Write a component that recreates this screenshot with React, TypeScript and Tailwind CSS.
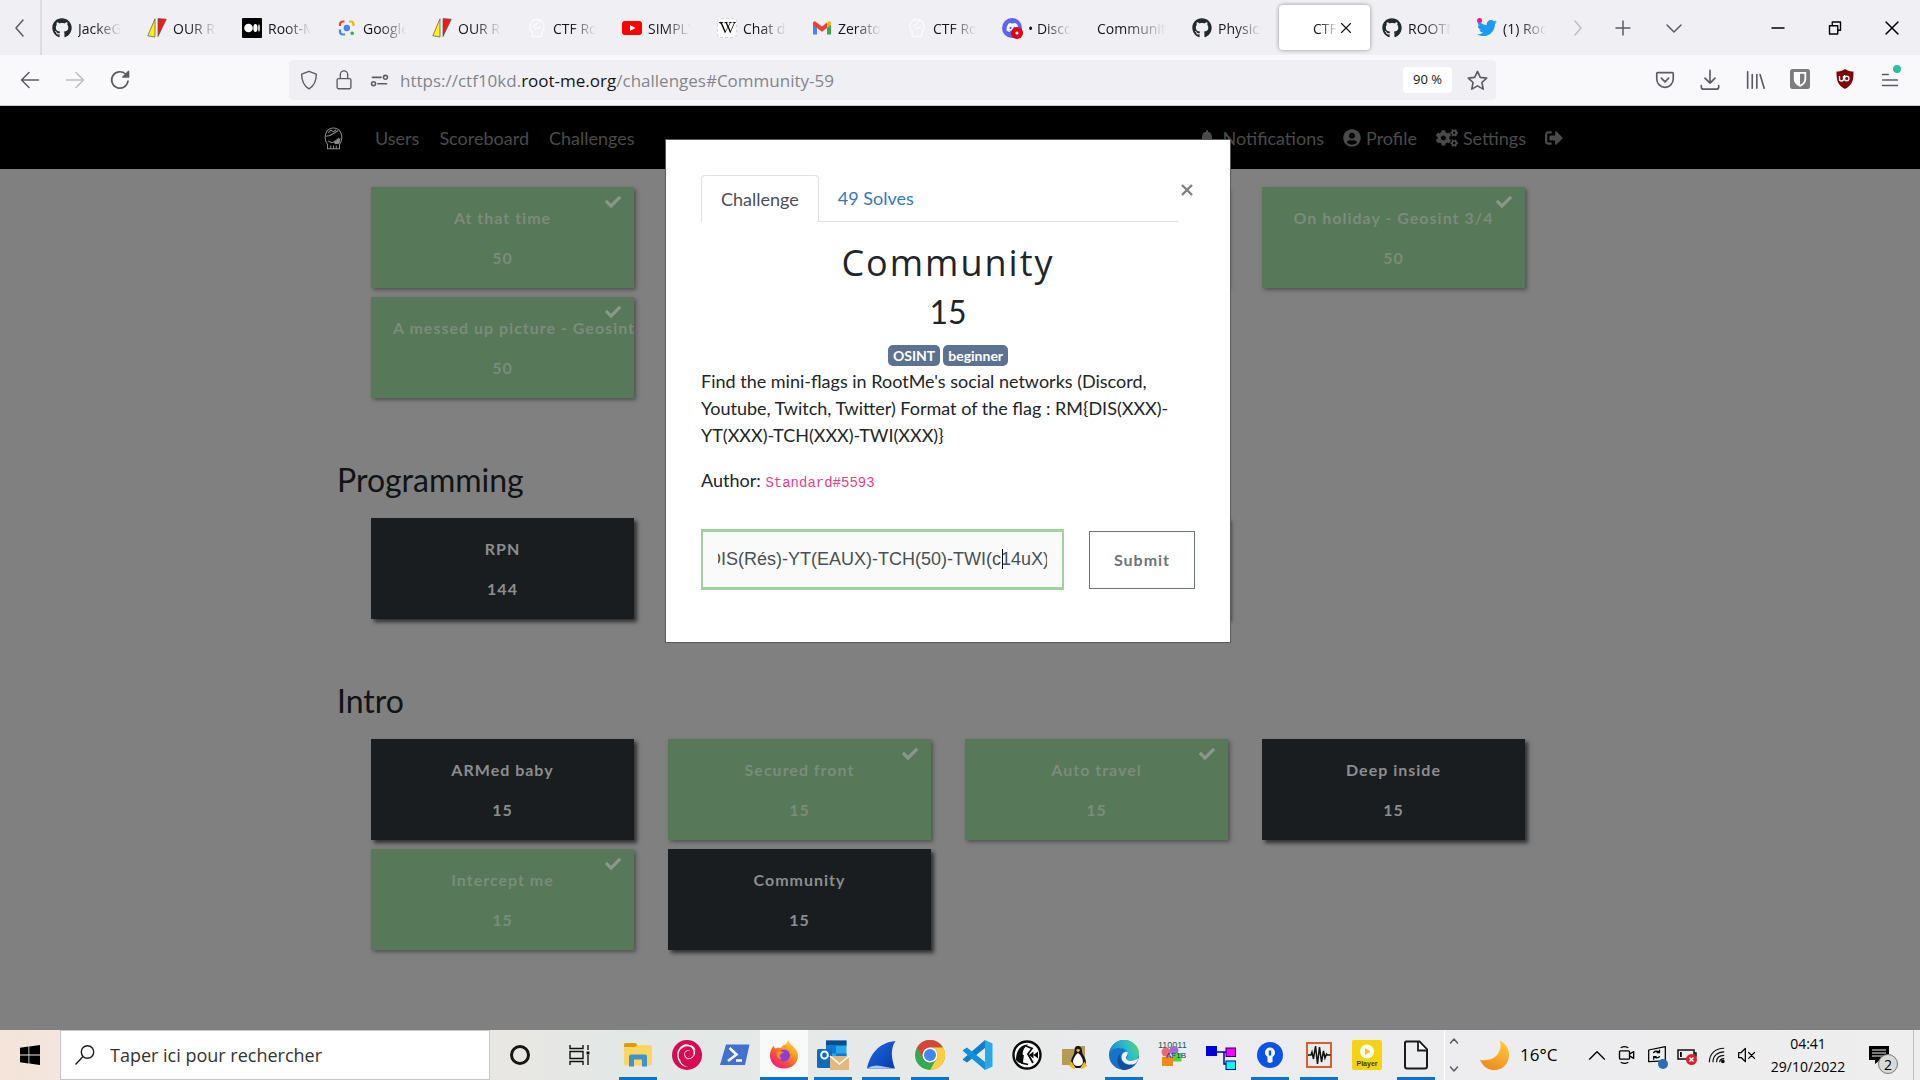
import { useEffect, useRef } from "react";
import type { ReactNode } from "react";
import {
  FaBell,
  FaCheck,
  FaCogs,
  FaGithub,
  FaSignOutAlt,
  FaTwitter,
  FaUserCircle,
  FaWikipediaW,
  FaDiscord,
} from "react-icons/fa";
import { SiDebian } from "react-icons/si";

/* ---------- favicons ---------- */

const Github = () => <FaGithub className="size-5 text-[#24292f]" />;

const Slashes = () => (
  <svg viewBox="0 0 20 20" className="size-5">
    <path d="M8 .8V19L.8 17.8z" fill="#ffee10" stroke="#555" strokeWidth=".7" />
    <path d="M11 .6l8.3.6L11 18.6z" fill="#ee1c1c" stroke="#555" strokeWidth=".7" />
  </svg>
);

const Medium = () => (
  <svg viewBox="0 0 20 20" className="size-5">
    <rect width="20" height="20" rx="1" />
    <circle cx="6.5" cy="10" r="4.3" fill="#fff" />
    <ellipse cx="13.4" cy="10" rx="2.1" ry="4.1" fill="#fff" />
    <ellipse cx="17" cy="10" rx=".8" ry="3.7" fill="#fff" />
  </svg>
);

const Lens = () => (
  <svg viewBox="0 0 20 20" className="size-5" fill="none" strokeWidth="2.2">
    <path d="M3 8V6.500A3 3 0 0 1 6 3.500h1.500" stroke="#ea4335" />
    <path d="M12 3.500h1.500a3 3 0 0 1 3 3V8" stroke="#f4b400" />
    <path d="M3 11.500V13.500a3 3 0 0 0 3 3h2" stroke="#4285f4" />
    <circle cx="9.800" cy="10" r="3.200" fill="#4285f4" />
    <circle cx="15.200" cy="15.200" r="1.800" fill="#34a853" />
  </svg>
);

const FaintSkull = () => (
  <svg viewBox="0 0 20 20" className="size-5" fill="none" stroke="#fafafc" strokeWidth="1.500">
    <path d="M5 14C1.500 10 3 1.500 10 1.500S18.500 10 15 14l-.5 4.500h-9zM6 9l7-6M8 11l6-2" />
  </svg>
);

const Youtube = () => (
  <svg viewBox="0 0 20 20" className="size-5">
    <rect y="3" width="20" height="14" rx="3" fill="#f00" />
    <path d="M8 7l5.500 3L8 13z" fill="#fff" />
  </svg>
);

const Wikipedia = () => (
  <span className="flex size-5 items-center justify-center rounded-sm border border-dashed border-neutral-300 bg-white">
    <FaWikipediaW className="size-[17px] text-black" />
  </span>
);

const Gmail = () => (
  <svg viewBox="0 0 20 20" className="size-5">
    <path d="M1 5v11.500h4V8.500z" fill="#4285f4" />
    <path d="M19 5v11.500h-4V8.500z" fill="#34a853" />
    <path d="M15 4.500L17 3q2 0 2 2v2l-4 3z" fill="#fbbc04" />
    <path d="M1 5q0-2 2-1.800L10 8.600l5-4V10l-5 3.800L5 10 1 7z" fill="#ea4335" />
  </svg>
);

const Discord = () => (
  <span className="relative flex size-5 items-center justify-center rounded-full bg-[#5865f2]">
    <FaDiscord className="size-[13px] text-white" />
    <svg viewBox="0 0 12 12" className="absolute -right-px -bottom-px size-3">
      <circle cx="6" cy="6" r="6" fill="#e3000f" />
      <circle cx="6" cy="6" r="1.500" fill="#fff" />
    </svg>
  </span>
);

const Twitter = () => (
  <span className="relative size-5">
    <FaTwitter className="size-5 text-[#1d9bf0]" />
    <span className="absolute top-0 left-0 size-[5px] rounded-full bg-[#f91880]" />
  </span>
);

type Tab = { label: string; icon?: ReactNode };

const tabs: Tab[] = [
  { label: "JackeG", icon: <Github /> },
  { label: "OUR RA", icon: <Slashes /> },
  { label: "Root-M", icon: <Medium /> },
  { label: "Google", icon: <Lens /> },
  { label: "OUR RA", icon: <Slashes /> },
  { label: "CTF Ro", icon: <FaintSkull /> },
  { label: "SIMPLY", icon: <Youtube /> },
  { label: "Chat de", icon: <Wikipedia /> },
  { label: "Zerato", icon: <Gmail /> },
  { label: "CTF Ro", icon: <FaintSkull /> },
  { label: "• Disco", icon: <Discord /> },
  { label: "Communit" },
  { label: "Physics", icon: <Github /> },
];

const lastTabs: Tab[] = [
  { label: "ROOTM", icon: <Github /> },
  { label: "(1) Roo", icon: <Twitter /> },
];

function TabButton({ tab }: { tab: Tab }) {
  return (
    <button className="flex h-full min-w-0 items-center gap-[6px] pr-4 pl-[10px] text-left">
      {tab.icon && <span className="flex shrink-0">{tab.icon}</span>}
      <span className="min-w-0 flex-1 overflow-hidden pt-px text-[14px] whitespace-nowrap text-[#15141a] [mask-image:linear-gradient(to_right,#000_40%,transparent)]">
        {tab.label}
      </span>
    </button>
  );
}

/* ---------- generic line icon ---------- */

function Line({ d, size = "size-6", width = 1.5, color = "text-[#5b5b66]" }: { d: string; size?: string; width?: number; color?: string }) {
  return (
    <svg viewBox="0 0 24 24" className={`shrink-0 ${size} ${color}`} fill="none" stroke="currentColor" strokeWidth={width} strokeLinecap="round" strokeLinejoin="round">
      <path d={d} />
    </svg>
  );
}

function TabStrip() {
  return (
    <div className="flex h-[55px] shrink-0 items-center bg-[#f0f0f4]">
      <button aria-label="Scroll tabs left" className="flex h-full w-[42px] items-center justify-center border-r-2 border-[#dcdce2]">
        <Line d="M15 4l-7 8 7 8" />
      </button>
      <div className="grid h-full min-w-0 flex-1 auto-cols-[minmax(0,1fr)] grid-flow-col items-center">
        {tabs.map((t, i) => (
          <TabButton key={i} tab={t} />
        ))}
        <div className="flex h-full min-w-0 items-center px-[2px]">
          <button className="flex h-[45px] w-full items-center gap-[3px] rounded bg-white pl-[34px] text-left shadow-[0_0_4px_rgba(0,0,0,0.4)]">
            <span className="w-6 shrink-0 overflow-hidden pt-px text-[14px] text-[#15141a] [mask-image:linear-gradient(to_right,#000_30%,transparent)]">CTF</span>
            <Line d="M3 3l18 18M21 3L3 21" size="size-3" width={2.2} color="text-[#15141a]" />
          </button>
        </div>
        {lastTabs.map((t, i) => (
          <TabButton key={i} tab={t} />
        ))}
      </div>
      <button aria-label="Scroll tabs right" className="flex w-[32px] justify-center">
        <Line d="M9 5l6 7-6 7" color="text-[#bdbdc4]" />
      </button>
      <button aria-label="New tab" className="flex w-[58px] justify-center">
        <Line d="M12 5v14M5 12h14" />
      </button>
      <button aria-label="List all tabs" className="flex w-[44px] justify-center">
        <Line d="M5 9l7 7 7-7" />
      </button>
      <button aria-label="Minimize" className="ml-[53px] flex w-[57px] justify-center">
        <Line d="M6 12h12" color="text-black" />
      </button>
      <button aria-label="Restore" className="flex w-[57px] justify-center">
        <Line d="M6 9.500h9v9H6zM9 9.500v-4h9v9h-3" color="text-black" size="size-[22px]" />
      </button>
      <button aria-label="Close window" className="flex w-[57px] justify-center">
        <Line d="M6 6l12 12M18 6L6 18" color="text-black" />
      </button>
    </div>
  );
}

function Toolbar() {
  return (
    <div className="flex h-[51px] shrink-0 items-center border-b border-[#c8c8cc] bg-[#f9f9fb]">
      <div className="flex w-[289px] shrink-0 pl-[7px]">
        <button aria-label="Back" className="flex w-[45px] justify-center">
          <Line d="M20.500 12h-17M11 4.500L3.500 12l7.500 7.500" />
        </button>
        <button aria-label="Forward" className="flex w-[45px] justify-center">
          <Line d="M3.500 12h17M13 4.500l7.500 7.500-7.500 7.500" color="text-[#bcbcc2]" />
        </button>
        <button aria-label="Reload" className="flex w-[45px] justify-center">
          <Line d="M20 13a8.200 8.200 0 1 1-2.500-7L20 8.500M20.500 3.500v5.500H15zM20 5l-3 3.500h3z" width={1.7} />
        </button>
      </div>
      <div className="flex h-10 min-w-0 flex-1 items-center rounded bg-[#f0f0f4]">
        <span className="flex w-[40px] justify-center">
          <Line d="M12 2.500l8 3.200c0 7-1.500 12-8 16C5.500 17.700 4 12.700 4 5.700z" size="size-[22px]" />
        </span>
        <span className="flex w-[30px] justify-center">
          <Line d="M6 10.500h12a1.500 1.500 0 0 1 1.500 1.500v8a1.500 1.500 0 0 1-1.500 1.500H6A1.500 1.500 0 0 1 4.500 20v-8A1.500 1.500 0 0 1 6 10.500zM8 10.500V6a4 4 0 0 1 8 0v4.500" size="size-[22px]" />
        </span>
        <span className="flex w-[41px] justify-center">
          <Line d="M3 8h11M19.500 5.500a2.500 2.500 0 1 1 0 5 2.500 2.500 0 0 1 0-5zM10 16h11M4.500 13.500a2.500 2.500 0 1 1 0 5 2.500 2.500 0 0 1 0-5z" size="size-[19px]" width={2} />
        </span>
        <div className="min-w-0 flex-1 truncate pt-[2px] text-[17px] text-[#84848c]">
          https://ctf10kd.<span className="text-[#15141a]">root-me.org</span>/challenges#Community-59
        </div>
        <button className="mr-[6px] flex h-[26px] w-[49px] items-center justify-center rounded bg-white text-[13px] text-[#15141a]">90 %</button>
        <button aria-label="Bookmark this page" className="flex w-[38px] justify-center">
          <Line d="M12 2.500l2.900 6.200 6.700.8-5 4.600 1.400 6.900-6-3.400-6 3.400 1.400-6.900-5-4.600 6.700-.8z" size="size-[23px]" width={1.7} />
        </button>
      </div>
      <div className="ml-[146px] flex shrink-0 pr-2">
        <button aria-label="Pocket" className="flex w-[45px] justify-center">
          <Line d="M4 4h16a1 1 0 0 1 1 1v6a9 9 0 0 1-18 0V5a1 1 0 0 1 1-1zM8 10l4 4 4-4" size="size-[22px]" width={1.8} />
        </button>
        <button aria-label="Downloads" className="flex w-[45px] justify-center">
          <Line d="M12 1.500v14M6.500 10l5.500 5.500L17.500 10M2.500 18v1.500a2.500 2.500 0 0 0 2.500 2.500h14a2.500 2.500 0 0 0 2.500-2.500V18" size="size-[22px]" width={1.8} />
        </button>
        <button aria-label="Library" className="flex w-[45px] justify-center">
          <Line d="M4 3v18M9 6v15M14 6v15M17.500 6l4.500 15" size="size-[22px]" width={1.8} />
        </button>
        <button aria-label="Bitwarden" className="flex w-[45px] justify-center">
          <svg viewBox="0 0 20 20" className="size-5">
            <rect width="20" height="20" rx="2.500" fill="#7b7b80" />
            <path d="M3.800 3h12.400v7c0 4-3 6.200-6.200 7.800C6.800 16.200 3.800 14 3.800 10z" fill="#fff" />
            <path d="M10 4.800h4.400V10c0 2.700-2 4.500-4.400 5.800z" fill="#7b7b80" />
          </svg>
        </button>
        <button aria-label="uBlock Origin" className="flex w-[45px] justify-center">
          <svg viewBox="0 0 20 20" className="size-5">
            <path d="M10 0c3 2 5.500 2.500 8.500 2.500 0 9-1 13.500-8.500 17.500C2.500 16 1.500 11.500 1.500 2.500 4.500 2.500 7 2 10 0z" fill="#800008" />
            <path d="M4.500 7v3a2 2 0 0 0 4 0V7M9.500 6v5.500M9.500 9.500a2.200 2.200 0 1 0 4.400 0 2.200 2.200 0 0 0-4.400 0" fill="none" stroke="#fff" strokeWidth="1.400" />
          </svg>
        </button>
        <button aria-label="Open application menu" className="relative flex w-[45px] justify-center">
          <Line d="M4 6h6M4 12h16M4 18h16" size="size-[22px]" width={1.8} />
          <span className="absolute -top-1 right-[11px] size-[8px] rounded-full bg-[#2ac3a2]" />
        </button>
      </div>
    </div>
  );
}

/* ---------- page ---------- */

function SiteNav() {
  return (
    <nav className="h-[63px] bg-black pr-6">
      <div className="mx-auto flex h-full max-w-[1256px] items-center pt-px pr-[13px] text-lg text-[#4a4a4a]">
        <a href="#home" aria-label="Home" className="mr-[32px] pt-[2px] pl-[4px]">
          <svg viewBox="0 0 20 26" className="h-[24px] w-[19px]" fill="none" stroke="#8a8a8a" strokeWidth="1.100">
            <path d="M3.500 19C-1 13 .5 1 10 1s11 12 6.500 18v4.500h-13zM2 10C8 10 9 7 15 4M4 6.500l3-3 3 1.500 3-2M4 15l4 2 3-1 5-4M7 23v-3M10 23v-3M13 23v-3" />
            <path d="M11 16.500l6-3.500-1 4.500-4 .5z" fill="#8a8a8a" />
          </svg>
        </a>
        <div className="flex gap-5">
          <a href="#users">Users</a>
          <a href="#scoreboard">Scoreboard</a>
          <a href="#challenges">Challenges</a>
        </div>
        <div className="ml-auto flex items-center gap-[19px]">
          <a href="#notifications" className="flex items-center gap-2"><FaBell className="size-4" />Notifications</a>
          <a href="#profile" className="flex items-center gap-[5px]"><FaUserCircle className="size-[18px]" />Profile</a>
          <a href="#settings" className="flex items-center gap-[5px]"><FaCogs className="size-[22px]" />Settings</a>
          <a href="#logout" aria-label="Log out"><FaSignOutAlt className="size-[18px]" /></a>
        </div>
      </div>
    </nav>
  );
}

type Challenge = { name: string; value: string; solved?: boolean; covered?: boolean };

function Card({ name, value, solved }: Challenge) {
  return (
    <button
      className={
        "relative flex h-[101px] min-w-0 flex-col items-center pt-[19px] text-base leading-6 font-bold tracking-[1px] whitespace-nowrap " +
        (solved
          ? "bg-[#577859] text-[#7b8c7c] shadow-[2px_2px_4px_rgba(50,50,50,0.6)]"
          : "bg-[#1a1d20] text-[#8c8d8e] shadow-[3px_3px_4px_rgba(20,20,20,0.75)]")
      }
    >
      <span className="w-full overflow-hidden px-[22px] text-center">{name}</span>
      <span className="mt-4">{value}</span>
      {solved && <FaCheck className="absolute top-[7px] right-[13px] size-4 text-[#8a978b]" />}
    </button>
  );
}

function CardGrid({ items }: { items: Challenge[] }) {
  return (
    <div className="grid grid-cols-4 gap-x-[34px] gap-y-[9px] px-[51px]">
      {items.map((c, i) =>
        c.covered ? (
          <div key={i} aria-hidden="true" className={c.solved ? "h-[101px] bg-[#577859] shadow-[2px_2px_4px_rgba(50,50,50,0.6)]" : "h-[101px] bg-[#1a1d20] shadow-[3px_3px_4px_rgba(20,20,20,0.75)]"} />
        ) : (
          <Card key={i} {...c} />
        )
      )}
    </div>
  );
}

const geosint: Challenge[] = [
  { name: "At that time", value: "50", solved: true },
  { name: "", value: "", solved: true, covered: true },
  { name: "", value: "", solved: true, covered: true },
  { name: "On holiday - Geosint 3/4", value: "50", solved: true },
  { name: "A messed up picture - Geosint", value: "50", solved: true },
];

const programming: Challenge[] = [
  { name: "RPN", value: "144" },
  { name: "", value: "", covered: true },
  { name: "", value: "", covered: true },
];

const intro: Challenge[] = [
  { name: "ARMed baby", value: "15" },
  { name: "Secured front", value: "15", solved: true },
  { name: "Auto travel", value: "15", solved: true },
  { name: "Deep inside", value: "15" },
  { name: "Intercept me", value: "15", solved: true },
  { name: "Community", value: "15" },
];

function Heading({ children }: { children: ReactNode }) {
  return <h3 className="mt-[62px] mb-[18px] pl-[17px] text-[32px] leading-10 text-[#111315]">{children}</h3>;
}

function FlagInput() {
  const ref = useRef<HTMLInputElement>(null);
  useEffect(() => {
    if (ref.current) ref.current.scrollLeft = 44;
  }, []);
  return (
    <div className="relative min-w-0 flex-1">
      <input
        ref={ref}
        aria-label="Flag"
        defaultValue="RM{DIS(Rés)-YT(EAUX)-TCH(50)-TWI(c14uX)}"
        className="block h-[61px] w-full border-x-2 border-y-[3px] border-[#a3d39c] bg-[#fafafa] px-[15px] font-['Liberation_Sans',Arial,sans-serif] text-lg text-[#495057] outline-none"
      />
      <span className="absolute top-[20px] right-[61px] h-5 w-px bg-black" />
    </div>
  );
}

function ChallengeDialog() {
  return (
    <div role="dialog" aria-label="Community" className="w-[566px] border border-[#5a5a5a] bg-white px-[35px] pt-[35px] pb-[52px] text-lg leading-[27px] text-[#212529]">
      <div className="flex items-start">
        <div role="tablist" className="flex h-[47px] flex-1 border-b border-[#dee2e6]">
          <button role="tab" aria-selected="true" className="-mb-px h-[47px] rounded-t border border-b-0 border-[#dee2e6] bg-white px-[19px] text-[#495057]">Challenge</button>
          <button role="tab" aria-selected="false" className="px-[19px] text-[#337ab7]">49 Solves</button>
        </div>
        <button aria-label="Close" className="mt-[7px] flex h-4 w-[17px] items-center justify-center pl-[1px] text-[#808080]">
          <svg viewBox="0 0 12 12" className="size-3 shrink-0" fill="none" stroke="currentColor" strokeWidth="2.400"><path d="M1 1l10 10M11 1L1 11" /></svg>
        </button>
      </div>
      <h2 className="mt-[18px] text-center font-['Open_Sans',sans-serif] text-[36px] leading-[45px] tracking-[2px]">Community</h2>
      <h3 className="mt-[7px] text-center text-[32px] leading-10">15</h3>
      <div className="mt-[13px] flex justify-center gap-[3px] text-sm leading-[21px] font-bold text-white">
        <span className="rounded-[5px] bg-[#5b7290] px-[5px]">OSINT</span>
        <span className="rounded-[5px] bg-[#5b7290] px-[5px]">beginner</span>
      </div>
      <p className="mt-[2px]">
        Find the mini-flags in RootMe's social networks (Discord, Youtube, Twitch, Twitter) Format of the flag : RM&#123;DIS(XXX)-YT(XXX)-TCH(XXX)-TWI(XXX)&#125;
      </p>
      <p className="mt-[18px]">
        Author: <code className="font-['Liberation_Mono',monospace] text-[14px] text-[#e83e8c]">Standard#5593</code>
      </p>
      <div className="mt-[32px] flex items-center gap-[25px]">
        <FlagInput />
        <button className="h-[58px] w-[106px] border border-[#6c757d] text-base font-bold tracking-[1px] text-[#6c757d]">Submit</button>
      </div>
    </div>
  );
}

/* ---------- taskbar ---------- */

type App = { name: string; icon: ReactNode; running?: boolean; active?: boolean };

const apps: App[] = [
  {
    name: "File Explorer",
    running: true,
    icon: (
      <svg viewBox="0 0 30 30" className="size-[30px]">
        <path d="M1 4.500Q1 3 2.500 3H12q2 0 2 2v3H1z" fill="#d89a17" />
        <path d="M1 7h11l2.500-2H27q2 0 2 2v16.500q0 2-2 2H3q-2 0-2-2z" fill="#fcd65e" />
        <path d="M6 16.500q0-2 2-2h14q2 0 2 2v10h-5v-7h-8v7H6z" fill="#3f92d2" />
      </svg>
    ),
  },
  {
    name: "Debian",
    icon: (
      <span className="flex size-[30px] items-center justify-center rounded-full bg-[#d70a53]">
        <SiDebian className="size-[23px] text-white" />
      </span>
    ),
  },
  {
    name: "PowerShell",
    icon: (
      <svg viewBox="0 0 30 30" className="size-[30px]">
        <path d="M6 4.500h23.500L25 25H0z" fill="#4070d0" />
        <path d="M9.500 8l7 6.500-8.500 6.500M16 20.500h6" fill="none" stroke="#fff" strokeWidth="2.600" />
      </svg>
    ),
  },
  {
    name: "Firefox",
    running: true,
    active: true,
    icon: (
      <svg viewBox="0 0 30 30" className="size-[30px]">
        <defs>
          <linearGradient id="fx" x1="1" y1="0" x2=".2" y2="1">
            <stop offset="0" stopColor="#fff24a" />
            <stop offset=".35" stopColor="#ffa61e" />
            <stop offset=".7" stopColor="#ff4a3c" />
            <stop offset="1" stopColor="#e8198b" />
          </linearGradient>
        </defs>
        <path d="M15 28.500C6.500 28.500 1 22.500 1 15.500 1 11 2.500 8 5 5.500c0 1.500.5 2.500 1 3C8 7.500 10 7.500 12 8c1-2.500 3-3.500 5-3.500.5-2 1.500-3.500 3-4 0 3.500 4 5 6 8 2 2 3 4.500 3 7.500 0 7-6 12.500-14 12.500z" fill="url(#fx)" />
        <circle cx="15" cy="15.500" r="6" fill="#8b3fd6" />
        <path d="M7.500 11.500c3-1 5.500-.5 7.500 1.200-2 .3-3.500 1-4 2.800-.2 1.500.5 3 2 4-3.500 0-6-3-5.500-8z" fill="#ff8a25" />
      </svg>
    ),
  },
  {
    name: "Outlook",
    running: true,
    icon: (
      <svg viewBox="0 0 32 32" className="size-[32px]">
        <path d="M9 1.500h20.500v20H9z" fill="#28a8ea" />
        <path d="M9 1.500h20.500v5H9z" fill="#0a4d8f" />
        <path d="M9 6.500h10v8H9zM19 14.500h10.500v7H19z" fill="#0f78d4" />
        <rect y="10" width="15" height="19" rx="1.500" fill="#0f6cbd" />
        <ellipse cx="7.500" cy="16" rx="3.300" ry="3.600" fill="none" stroke="#fff" strokeWidth="2" />
        <path d="M13 17h19v14H13z" fill="#e6b87e" />
        <path d="M13 17l9.500 8 9.500-8" fill="none" stroke="#fff" strokeWidth="1.600" />
      </svg>
    ),
  },
  {
    name: "Wireshark",
    running: true,
    icon: (
      <svg viewBox="0 0 30 30" className="size-[30px]">
        <defs>
          <linearGradient id="ws" x1="0" y1="0" x2="1" y2="1">
            <stop offset="0" stopColor="#1b6be8" />
            <stop offset="1" stopColor="#0a3aa8" />
          </linearGradient>
        </defs>
        <path d="M1 28.500C4 14 13 2.500 29.500 1 24 9 25.500 19 29 28.500z" fill="url(#ws)" />
        <path d="M1 28.500q6-4 14-2.500t14 2.500z" fill="#a9c6ee" />
      </svg>
    ),
  },
  {
    name: "Chrome",
    running: true,
    icon: (
      <svg viewBox="0 0 30 30" className="size-[30px]">
        <circle cx="15" cy="15" r="15" fill="#34a853" />
        <path d="M15 0a15 15 0 0 1 13 7.500H15L8.500 18.750 2 7.500A15 15 0 0 1 15 0z" fill="#db4437" />
        <path d="M28 7.500A15 15 0 0 1 15 30l6.500-11.250a7.500 7.500 0 0 0 0-7.500L15 7.500z" fill="#ffcd40" />
        <circle cx="15" cy="15" r="7.500" fill="#fff" />
        <circle cx="15" cy="15" r="6" fill="#4285f4" />
      </svg>
    ),
  },
  {
    name: "Visual Studio Code",
    icon: (
      <svg viewBox="0 0 30 30" className="size-[30px]">
        <path d="M22 0l7.500 3.500v23L22 30z" fill="#29a8ec" />
        <path d="M22 0v8L4 22.500 0 20 0 19z" fill="#0d7fcb" />
        <path d="M22 30v-8L4 7.500 0 10v1z" fill="#1390dc" />
      </svg>
    ),
  },
  {
    name: "Kleopatra",
    icon: (
      <svg viewBox="0 0 30 30" className="size-[30px]">
        <circle cx="15" cy="15" r="13.500" fill="#fff" stroke="#0b0b0b" strokeWidth="2.400" />
        <path d="M4 20C4 10 9 4.500 16 4.500c-4 3-6 7-5 11l-1 8c-3-.5-5-2-6-3.500z" fill="#0b0b0b" />
        <path d="M14 6l6 2.500-4 5.500 5 9M11 15l-1 8 6 1.500" fill="none" stroke="#0b0b0b" strokeWidth="1.800" />
        <path d="M17 15l4.500-3.500v7zM21.500 15l4.500-3.500v7z" fill="#0b0b0b" />
      </svg>
    ),
  },
  {
    name: "Linux files",
    icon: (
      <svg viewBox="0 0 30 30" className="size-[30px]">
        <path d="M1 9h12l2-3h9v19H1z" fill="#b79a55" />
        <path d="M17 6c2.500 0 4 2 4 5 0 4 4 6 4 12 0 3-3 5-8 5s-7-2-7-5c0-6 3.500-8 3.500-12 0-3 1-5 3.500-5z" fill="#161616" />
        <path d="M17 13c3 2 5 6 5 9 0 2-2 4-5 4s-5-2-5-4c0-3 2-7 5-9z" fill="#fff" />
        <path d="M15 10l2-1.200 2.300 1.200L17 12.500zM8 26l2.500-4.500 4 6-1.500 1.500zM26 26l-2.500-4.500-4 6 1.500 1.500z" fill="#f5b71c" />
      </svg>
    ),
  },
  {
    name: "Edge",
    running: true,
    icon: (
      <svg viewBox="0 0 30 30" className="size-[30px]">
        <defs>
          <linearGradient id="eg" x1="0" y1=".5" x2="1" y2=".2">
            <stop offset="0" stopColor="#1b87d4" />
            <stop offset=".6" stopColor="#2bbfc8" />
            <stop offset="1" stopColor="#5fd668" />
          </linearGradient>
        </defs>
        <circle cx="15" cy="15" r="15" fill="#1673c8" />
        <path d="M0 14C1 6 7 0 15 0s15 6 15 13c0 5-4 8-8 8-3 0-5-1-5-2s2-2 2-5c0-3-4-6-9-6-4 0-8 2-10 6z" fill="url(#eg)" />
        <path d="M12 13c-2 5 1 11 7 12 3 .5 6-1 8-3-3 6-8 8-13 8-6-3-8-12-2-17z" fill="#124f9d" />
        <path d="M18.500 12c1 3-2 4.500-1.500 6.500 1 3 7 3.500 12.500-.5-.5 3-2 5-4 6-6 2-13-1-13-7 0-3 3-6 6-5z" fill="#edf1f2" />
      </svg>
    ),
  },
  {
    name: "Binary viewer",
    icon: (
      <svg viewBox="0 0 30 30" className="size-[30px]">
        <text x="0" y="8" fontSize="9" fontFamily="Liberation Sans, sans-serif" fill="#155b4c">110011</text>
        <circle cx="8" cy="12" r="4.500" fill="#ee6677" />
        <circle cx="16" cy="10.500" r="4.500" fill="#a06bd8" />
        <rect x="15" y="13" width="8.500" height="8.500" fill="#55d33c" />
        <rect x="4" y="17" width="11" height="9" fill="#f28a1c" />
        <text x="8" y="18" fontSize="8" fontFamily="Liberation Sans, sans-serif" fill="#15307a">AF1B</text>
      </svg>
    ),
  },
  {
    name: "Node graph",
    icon: (
      <svg viewBox="0 0 30 30" className="size-[30px]">
        <path d="M10 12h8v12h3M10 12h12" fill="none" stroke="#0000a8" strokeWidth="1.500" />
        <rect y="6" width="11" height="10" fill="#0000d8" />
        <rect x="20" y="8" width="9.500" height="8.500" fill="#f0f" stroke="#000080" />
        <rect x="20" y="21" width="9.500" height="8.500" fill="#0ff" stroke="#000080" />
      </svg>
    ),
  },
  {
    name: "Keyhole",
    running: true,
    icon: (
      <svg viewBox="0 0 30 30" className="size-[30px]">
        <circle cx="15" cy="15" r="13" fill="#0a53e4" />
        <circle cx="15" cy="12.500" r="5" fill="#fff" />
        <path d="M12.500 15h5v7l-2.500 1-2.500-1z" fill="#fff" />
        <path d="M15 10.500v5" stroke="#0a53e4" strokeWidth="2.500" />
      </svg>
    ),
  },
  {
    name: "Waveform editor",
    running: true,
    icon: (
      <svg viewBox="0 0 30 30" className="size-[30px]">
        <rect x="3" y="3" width="24" height="24" fill="#e9ebec" stroke="#d2622a" strokeWidth="2" />
        <path d="M4 15h3l1-3 1.500 7 2-13 2 18 2-17 2 15 2-11 1.500 7 1.500-4 1 1h3" fill="none" stroke="#111" strokeWidth="1.500" />
      </svg>
    ),
  },
  {
    name: "Player",
    icon: (
      <svg viewBox="0 0 30 30" className="size-[30px]">
        <rect width="30" height="30" rx="2" fill="#f5d312" />
        <circle cx="15" cy="11.500" r="7" fill="#fff" />
        <path d="M13 8l5.500 3.500L13 15z" fill="#f5c800" />
        <text x="15" y="26" textAnchor="middle" fontSize="7" fontFamily="Liberation Sans, sans-serif" fontWeight="bold" fill="#4a3a00">Player</text>
      </svg>
    ),
  },
  {
    name: "Document",
    running: true,
    icon: (
      <svg viewBox="0 0 30 30" className="size-[30px]">
        <path d="M5 1.500h13.500l7.500 8v17q0 2-2 2H6q-2 0-2-2V2.500z" fill="#eceeef" stroke="#1a1a1a" strokeWidth="2" />
        <path d="M17 1.500v9h9" fill="#fff" stroke="#1a1a1a" strokeWidth="1.800" />
      </svg>
    ),
  },
];

function Taskbar() {
  return (
    <footer className="flex h-[50px] shrink-0 items-stretch bg-[linear-gradient(to_right,#f4e4d9_0px,#f3e6dc_60px,#e9e7e3_500px,#e3e8e6_620px,#e8eaea_1000px,#ececee_1200px,#eeeeef_100%)] text-black">
      <button aria-label="Start" className="flex w-[60px] items-center justify-center">
        <svg viewBox="0 0 20 20" className="size-5">
          <path d="M0 2.800l8.500-1.200v8H0zM9.300 1.500L20 0v9.600H9.300zM0 10.400h8.500v8L0 17.200zM9.300 10.400H20V20L9.300 18.500z" />
        </svg>
      </button>
      <label className="flex w-[430px] items-center gap-[15px] border border-[#c6c6c6] bg-white pl-[14px]">
        <svg viewBox="0 0 20 20" className="size-5" fill="none" stroke="#1a1a1a" strokeWidth="1.400">
          <circle cx="12.500" cy="7" r="6.200" />
          <path d="M8 11.500L.5 19.500" />
        </svg>
        <input type="search" aria-label="Search" placeholder="Taper ici pour rechercher" className="min-w-0 flex-1 text-lg outline-none placeholder:text-[#333]" />
      </label>
      <button aria-label="Cortana" className="flex w-[60px] items-center justify-center">
        <span className="size-5 rounded-full border-[3px] border-[#151515]" />
      </button>
      <button aria-label="Task view" className="flex w-[64px] items-center justify-center pr-1">
        <svg viewBox="0 0 22 20" className="h-5 w-[22px]" fill="none" stroke="#111" strokeWidth="1.400">
          <path d="M1 0v3.500h13V0M1 20v-3.500h13V20M1 6.500h13v7H1zM19 0v5M19 10v10" />
          <path d="M17.500 6.500h3v3h-3z" fill="#111" stroke="none" />
        </svg>
      </button>
      <div className="flex min-w-0 flex-1">
        {apps.map((a) => (
          <button
            key={a.name}
            aria-label={a.name}
            className={
              "flex min-w-0 flex-1 flex-col items-center justify-between pt-[10px] " + (a.active ? "bg-[#f8f9f9]" : "")
            }
          >
            <span className="flex h-[30px] items-center">{a.icon}</span>
            {a.running && <span className={a.active ? "h-[3px] w-full bg-[#0a74cc]" : "h-[3px] w-[38px] bg-[#0a74cc]"} />}
          </button>
        ))}
      </div>
      <div className="ml-1 flex w-[18px] flex-col items-center justify-between border-l border-white py-[5px]">
        <button aria-label="Scroll up" className="flex"><Line d="M5 16l7-8 7 8" size="size-3" width={3} /></button>
        <button aria-label="Scroll down" className="flex"><Line d="M5 8l7 8 7-8" size="size-3" width={3} /></button>
      </div>
      <button className="flex w-[120px] items-center gap-[10px] pl-[18px] text-[17px]">
        <svg viewBox="0 0 30 30" className="size-[30px]">
          <defs>
            <linearGradient id="mn" x1=".8" y1="0" x2=".3" y2="1">
              <stop offset="0" stopColor="#ffc93c" />
              <stop offset="1" stopColor="#ee8a1d" />
            </linearGradient>
          </defs>
          <path d="M20 .5c12 6 12 23 0 28.500-8 3-16 0-20-9 14 2 23-7 20-19.500z" fill="url(#mn)" />
        </svg>
        16°C
      </button>
      <div className="flex items-center">
        <button aria-label="Show hidden icons" className="flex w-[30px] justify-center"><Line d="M3 17l9-9 9 9" size="size-5" color="text-black" width={1.600} /></button>
        <button aria-label="Meet now" className="flex w-[30px] justify-center"><Line d="M4 7h10q1 0 1 1v8q0 1-1 1H4q-1 0-1-1V8q0-1 1-1zM15 11l5-3v8l-5-3M5 3q4-2 8 0M5 21q4 2 8 0" size="size-5" color="text-black" width={1.600} /></button>
        <button aria-label="Sync" className="relative flex w-[30px] justify-center">
          <Line d="M2 6l20-4v17l-20 1zM8 9q3-3 7 0M15 6v3h-3M15 14q-4 3-7 0M8 17v-3h3" size="size-5" color="text-black" width={1.500} />
          <span className="absolute right-[4px] -bottom-1 size-[10px] rounded-full bg-[#2b6cb5]" />
        </button>
        <button aria-label="Battery" className="relative flex w-[30px] justify-center">
          <svg viewBox="0 0 20 20" className="size-5">
            <path d="M1 5h16v9H1zM17 8h2v3h-2" fill="none" stroke="#111" strokeWidth="1.500" />
            <path d="M3 7h1.800v5H3z" />
            <circle cx="14.500" cy="14.500" r="5.500" fill="#d8232e" />
            <path d="M12.500 12.500l4 4M16.500 12.500l-4 4" stroke="#fff" strokeWidth="1.300" />
          </svg>
        </button>
        <button aria-label="Wi-Fi" className="flex w-[30px] justify-center">
          <svg viewBox="0 0 20 20" className="size-[18px]" fill="none" stroke="#111" strokeWidth="1.300">
            <path d="M1.500 18C1.500 9 8 2.500 18 2.500M5.500 18c0-7 5-11.500 12.500-11.500M9.500 18c0-5 3.500-7.500 8.500-7.500M13 18c0-2.500 2-4 5-4" />
            <circle cx="16.500" cy="17" r="1.400" fill="#111" />
          </svg>
        </button>
        <button aria-label="Volume muted" className="flex w-[30px] justify-center">
          <Line d="M2 9h3l5-5v16l-5-5H2zM14 9l7 7M21 9l-7 7" size="size-5" color="text-black" width={1.500} />
        </button>
      </div>
      <button className="flex w-[92px] flex-col items-center justify-center text-[14px] leading-[23px]">
        <span>04:41</span>
        <span>29/10/2022</span>
      </button>
      <button aria-label="Notifications" className="relative flex w-[60px] items-center justify-center border-r border-[#c0c0c2]">
        <svg viewBox="0 0 20 20" className="mr-[10px] size-5">
          <path d="M0 1h20v14H11l-5 4v-4H0z" />
          <path d="M3 5h14M3 8h14M3 11h14" stroke="#eee" strokeWidth="1.200" />
        </svg>
        <span className="absolute top-[24px] left-[24px] flex size-5 items-center justify-center rounded-full border border-[#777] bg-[#d9d9da] text-[14px]">2</span>
      </button>
      <button aria-label="Show desktop" className="w-[6px]" />
    </footer>
  );
}

export default function App() {
  return (
    <div className="flex min-h-screen flex-col bg-[#808080] font-['Open_Sans','Noto_Sans',sans-serif]">
      <TabStrip />
      <Toolbar />
      <main className="relative flex-1 overflow-hidden font-[Lato,sans-serif]">
        <SiteNav />
        <div className="pr-6">
          <div className="mx-auto max-w-[1256px] pt-[18px]">
            <CardGrid items={geosint} />
            <Heading>Programming</Heading>
            <CardGrid items={programming} />
            <Heading>Intro</Heading>
            <CardGrid items={intro} />
          </div>
        </div>
        <div className="absolute inset-0 flex items-start justify-center pt-[33px] pr-6">
          <ChallengeDialog />
        </div>
      </main>
      <Taskbar />
    </div>
  );
}
